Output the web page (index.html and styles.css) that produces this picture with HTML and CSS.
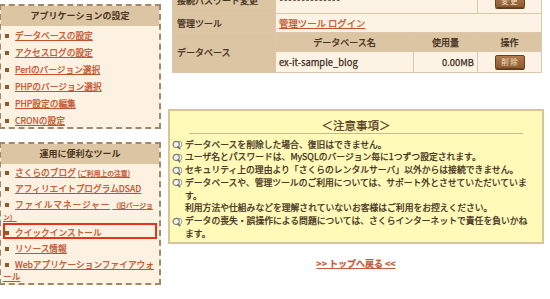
FILE: index.html
```html
<!DOCTYPE html>
<html lang="ja">
<head>
<meta charset="utf-8">
<link rel="stylesheet" href="styles.css">
</head>
<body>
<div class="page">
  <div class="sidebar">
    <div class="box">
      <div class="box-title">アプリケーションの設定</div>
      <ul class="menu menu-a">
        <li><a href="#">データベースの設定</a></li>
        <li><a href="#">アクセスログの設定</a></li>
        <li><a href="#">Perlのバージョン選択</a></li>
        <li><a href="#">PHPのバージョン選択</a></li>
        <li><a href="#">PHP設定の編集</a></li>
        <li><a href="#">CRONの設定</a></li>
      </ul>
    </div>
    <div class="box">
      <div class="box-title">運用に便利なツール</div>
      <ul class="menu menu-b">
        <li><a href="#">さくらのブログ</a> <a href="#" class="small">(ご利用上の注意)</a></li>
        <li><a href="#">アフィリエイトプログラムDSAD</a></li>
        <li><a href="#" class="wide">ファイルマネージャー</a> <a href="#" class="small">（旧バージョ<wbr>ン）</a></li>
        <li class="hl"><a href="#">クイックインストール</a></li>
        <li><a href="#">リソース情報</a></li>
        <li><a href="#">Webアプリケーションファイアウォ<wbr>ール</a></li>
      </ul>
    </div>
  </div>
  <div class="main">
    <table class="info">
      <colgroup>
        <col class="c-label"><col class="c-name"><col class="c-use"><col class="c-op">
      </colgroup>
      <tr class="r1">
        <th class="label">接続パスワード変更</th>
        <td colspan="2" class="val">**************</td>
        <td class="op"><span class="btn">変 更</span></td>
      </tr>
      <tr class="r2">
        <th class="label">管理ツール</th>
        <td colspan="3" class="val"><a href="#">管理ツール ログイン</a></td>
      </tr>
      <tr class="r3">
        <th class="label" rowspan="2">データベース</th>
        <th class="head">データベース名</th>
        <th class="head">使用量</th>
        <th class="head">操作</th>
      </tr>
      <tr class="r4">
        <td class="val">ex-it-sample_blog</td>
        <td class="val num">0.00MB</td>
        <td class="op"><span class="btn">削 除</span></td>
      </tr>
    </table>

    <div class="notice">
      <div class="notice-title">＜注意事項＞</div>
      <hr class="notice-rule">
      <ul class="notes">
        <li><svg class="ico" width="12" height="10" viewBox="0 0 12 10"><circle cx="6.6" cy="4.4" r="3.1" fill="#fbfbf6" stroke="#a3a3a0" stroke-width="1.1"/><circle cx="4.2" cy="4.4" r="3.1" fill="#f4f4ee" stroke="#7d7d7a" stroke-width="1.2"/><path d="M5.3 6.6 L8.2 9.3" stroke="#6f6f6c" stroke-width="1.4"/></svg><span>データベースを削除した場合、復旧はできません。</span></li>
        <li><svg class="ico" width="12" height="10" viewBox="0 0 12 10"><circle cx="6.6" cy="4.4" r="3.1" fill="#fbfbf6" stroke="#a3a3a0" stroke-width="1.1"/><circle cx="4.2" cy="4.4" r="3.1" fill="#f4f4ee" stroke="#7d7d7a" stroke-width="1.2"/><path d="M5.3 6.6 L8.2 9.3" stroke="#6f6f6c" stroke-width="1.4"/></svg><span>ユーザ名とパスワードは、MySQLのバージョン毎に1つずつ設定されます。</span></li>
        <li><svg class="ico" width="12" height="10" viewBox="0 0 12 10"><circle cx="6.6" cy="4.4" r="3.1" fill="#fbfbf6" stroke="#a3a3a0" stroke-width="1.1"/><circle cx="4.2" cy="4.4" r="3.1" fill="#f4f4ee" stroke="#7d7d7a" stroke-width="1.2"/><path d="M5.3 6.6 L8.2 9.3" stroke="#6f6f6c" stroke-width="1.4"/></svg><span>セキュリティ上の理由より「さくらのレンタルサーバ」以外からは接続できません。</span></li>
        <li><svg class="ico" width="12" height="10" viewBox="0 0 12 10"><circle cx="6.6" cy="4.4" r="3.1" fill="#fbfbf6" stroke="#a3a3a0" stroke-width="1.1"/><circle cx="4.2" cy="4.4" r="3.1" fill="#f4f4ee" stroke="#7d7d7a" stroke-width="1.2"/><path d="M5.3 6.6 L8.2 9.3" stroke="#6f6f6c" stroke-width="1.4"/></svg><span>データベースや、管理ツールのご利用については、サポート外とさせていただいています。<br>利用方法や仕組みなどを理解されていないお客様はご利用をお控えください。</span></li>
        <li><svg class="ico" width="12" height="10" viewBox="0 0 12 10"><circle cx="6.6" cy="4.4" r="3.1" fill="#fbfbf6" stroke="#a3a3a0" stroke-width="1.1"/><circle cx="4.2" cy="4.4" r="3.1" fill="#f4f4ee" stroke="#7d7d7a" stroke-width="1.2"/><path d="M5.3 6.6 L8.2 9.3" stroke="#6f6f6c" stroke-width="1.4"/></svg><span>データの喪失・誤操作による問題については、さくらインターネットで責任を負いかねます。</span></li>
      </ul>
    </div>

    <div class="back"><a href="#">&gt;&gt; トップへ戻る &lt;&lt;</a></div>
  </div>
</div>
</body>
</html>
```

FILE: styles.css
```css
html, body {
  margin: 0;
  padding: 0;
  background: #ffffff;
  overflow: hidden;
}
body {
  font-family: "Noto Sans CJK JP", "Noto Sans", sans-serif;
  font-size: 9px;
  color: #3d2a19;
  -webkit-text-stroke: 0.25px currentColor;
}
a {
  color: #c2512c;
  text-decoration: underline;
}

.page {
  display: flex;
  align-items: flex-start;
}

/* ---------- sidebar ---------- */
.sidebar {
  width: 162px;
  margin-left: -1px;
  padding-top: 4px;
  display: flex;
  flex-direction: column;
  gap: 13px;
  flex: none;
}
.box {
  border: 2px dashed #a08868;
  background: #fdf2e2;
}
.box-title {
  background: #dcc5a2;
  height: 20px;
  line-height: 20px;
  text-align: center;
  font-weight: bold;
  font-size: 9px;
  color: #4a3421;
  -webkit-text-stroke: 0;
}
.menu {
  list-style: none;
  margin: 0;
  padding: 4px 0 0 2px;
  font-size: 8.7px;
}
.menu li {
  line-height: 12px;
  margin-top: 5px;
}
.menu li:first-child {
  margin-top: 0;
}
.menu-b {
  padding-top: 3px;
}
.menu-b li {
  margin-top: 4px;
}
.menu li::before {
  content: "";
  display: inline-block;
  width: 4px;
  height: 4px;
  background: #8d5a2c;
  margin: 0 6px 0 2px;
  vertical-align: 1px;
}
.menu .small {
  font-size: 6.8px;
}
.menu .wide {
  letter-spacing: 0.9px;
}
.menu .hl {
  position: relative;
}
.menu .hl::after {
  content: "";
  position: absolute;
  left: 0;
  right: 2px;
  top: -4px;
  bottom: 0;
  border: 2px solid #e8321c;
}

/* ---------- main ---------- */
.main {
  margin-left: 7px;
  width: 376px;
  flex: none;
}
.info {
  border-collapse: collapse;
  table-layout: fixed;
  width: 369px;
  margin: -13px 0 0 4px;
}
.c-label { width: 103px; }
.c-name { width: 138px; }
.c-use { width: 64px; }
.c-op { width: 64px; }
.info th, .info td {
  border: 1px solid #dcc7ab;
  padding: 0 3px;
  font-size: 9px;
  font-weight: normal;
  white-space: nowrap;
}
.r1 { height: 26px; }
.r2 { height: 19px; }
.r3 { height: 19px; }
.r4 { height: 21px; }
.info .label {
  background: #dcc5a3;
  text-align: left;
  padding-left: 4px;
  color: #3a2816;
}
.info .head {
  background: #dcc5a3;
  text-align: center;
  color: #3a2816;
}
.info .val {
  background: #fdf3e4;
  text-align: left;
  font-size: 9.4px;
}
.info .num {
  text-align: right;
}
.info .op {
  background: #fdf3e4;
  text-align: center;
}
.btn {
  display: inline-block;
  width: 30px;
  height: 14px;
  line-height: 12px;
  border: 1px solid #6a421f;
  border-radius: 2px;
  background: linear-gradient(#b07b4a, #8d5b31);
  box-shadow: 0 1px 0 #5c3b1d;
  color: #f2e2cc;
  font-size: 7.5px;
  text-align: center;
  vertical-align: middle;
  box-sizing: border-box;
  -webkit-text-stroke: 0;
}

.notice {
  margin-top: 36px;
  border: 2px solid #d9c596;
  background: #fffab8;
  padding: 6px 0 1.5px;
}
.notice-title {
  text-align: center;
  font-size: 11.5px;
  line-height: 16px;
  color: #55381d;
}
.notice-rule {
  margin: 0 19px;
  border: 0;
  border-top: 1px solid #cbb88f;
  height: 0;
}
.notes {
  list-style: none;
  margin: 4.6px 0 0;
  padding: 0 10px 0 2px;
  font-size: 8.8px;
  line-height: 12.75px;
  color: #3c2a18;
}
.notes li {
  display: flex;
  align-items: flex-start;
}
.notes .ico {
  flex: none;
  width: 12px;
  height: 10px;
  margin: 1.5px 1px 0 0;
}
.back {
  margin-top: 14px;
  text-align: center;
  line-height: 12px;
  font-size: 9px;
  font-weight: bold;
}
.back a {
  color: #c45a3b;
}
```
